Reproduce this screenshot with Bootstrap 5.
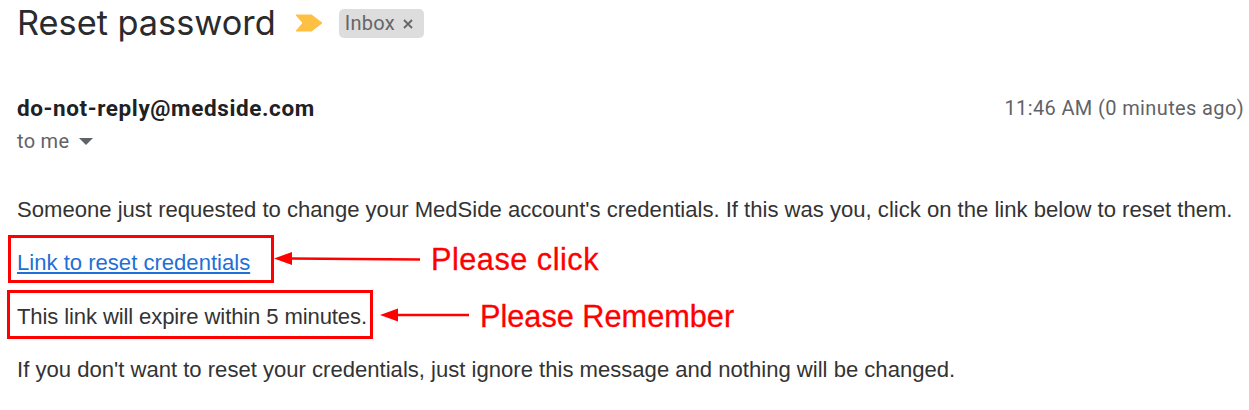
<!DOCTYPE html>
<html lang="en">
<head>
<meta charset="utf-8">
<title>Reset password</title>
<link href="https://cdn.jsdelivr.net/npm/bootstrap@5.3.0/dist/css/bootstrap.min.css" rel="stylesheet">
<style>
html,body{margin:0;background:#fff;overflow:hidden}
.mail-page{width:1249px;height:410px;padding:0 5px 0 17px;position:relative;overflow:hidden}
.subject-row{height:46px}
.subject-text{font:400 34.3px/46px Inter,sans-serif;color:#2a2b2e;margin:0}
.imp-mark{width:28px;height:18px;margin-left:19px;flex:none}
.inbox-chip{margin-left:16px;height:29px;width:85px;background:#ddd;border-radius:5px;color:#666;font:400 20px/29px Roboto,sans-serif;padding-left:6px;margin-top:1px;letter-spacing:.3px}
.chip-x{margin-left:7px;width:12px;height:12px;flex:none}
.sender-row{margin-top:49px;height:27px}
.sender-name{font:700 22.5px/27px Roboto,sans-serif;color:#202124;letter-spacing:.6px}
.sent-time{font:400 20px/27px Roboto,sans-serif;color:#5f6368;letter-spacing:.37px}
.to-row{margin-top:6px;height:26px;font:400 20px/26px Roboto,sans-serif;color:#5f6368;letter-spacing:.3px}
.caret-mark{width:0;height:0;border-left:7px solid transparent;border-right:7px solid transparent;border-top:7px solid #5f6368;margin-left:10px}
.mail-body{margin-top:43px;font:400 22.09px/26px "Liberation Sans",sans-serif;color:#333}
.mail-body .body-line{margin:0}
.mail-link{color:#1f6fd6;text-decoration:underline}
.mail-body .gap-a{margin-top:27px}
.mail-body .gap-b{margin-top:28px;letter-spacing:-.12px}
.mail-body .gap-c{margin-top:27px}
.note-box{position:absolute;border:3px solid #f00}
.note-label{position:absolute;color:#f00;font:400 30.7px/36px "Liberation Sans",sans-serif;white-space:nowrap;-webkit-text-stroke:.3px #f00}
.note-wide{letter-spacing:.5px}
.note-svg{position:absolute;left:0;top:0}
</style>
</head>
<body>
<div class="mail-page">
  <div class="subject-row d-flex align-items-center">
    <h1 class="subject-text">Reset password</h1>
    <svg class="imp-mark" viewBox="0 0 28 18" aria-hidden="true"><path d="M1 1H16.500L27 9 16.500 17H1L8 9Z" fill="#fdc043" stroke="#fdc043" stroke-linejoin="round"/></svg>
    <div class="inbox-chip d-flex align-items-center">Inbox
      <svg class="chip-x" viewBox="0 0 12 12" aria-hidden="true"><path d="M2 2 10 10M10 2 2 10" stroke="#666" stroke-width="1.800"/></svg>
    </div>
  </div>
  <div class="sender-row d-flex justify-content-between">
    <span class="sender-name">do-not-reply@medside.com</span>
    <span class="sent-time">11:46 AM (0 minutes ago)</span>
  </div>
  <div class="to-row d-flex align-items-center">to me<span class="caret-mark"></span></div>
  <div class="mail-body">
    <p class="body-line">Someone just requested to change your MedSide account's credentials. If this was you, click on the link below to reset them.</p>
    <p class="body-line gap-a"><a class="mail-link" href="#">Link to reset credentials</a></p>
    <p class="body-line gap-b">This link will expire within 5 minutes.</p>
    <p class="body-line gap-c">If you don't want to reset your credentials, just ignore this message and nothing will be changed.</p>
  </div>
  <div class="note-box" style="left:8px;top:235px;width:266px;height:48px"></div>
  <div class="note-box" style="left:7px;top:290px;width:366px;height:49px"></div>
  <svg class="note-svg" width="1249" height="410" aria-hidden="true">
    <path d="M290 258.500 420 259.500" stroke="#f00" stroke-width="2.500" fill="none"/>
    <path d="M274 258.500 292 252V265Z" fill="#f00"/>
    <path d="M396 315H469" stroke="#f00" stroke-width="2.500" fill="none"/>
    <path d="M380 315 398 308.500V321.500Z" fill="#f00"/>
  </svg>
  <span class="note-label note-wide" style="left:431px;top:242px">Please click</span>
  <span class="note-label" style="left:480px;top:299px">Please Remember</span>
</div>
<script src="https://cdn.jsdelivr.net/npm/bootstrap@5.3.0/dist/js/bootstrap.bundle.min.js"></script>
</body>
</html>
